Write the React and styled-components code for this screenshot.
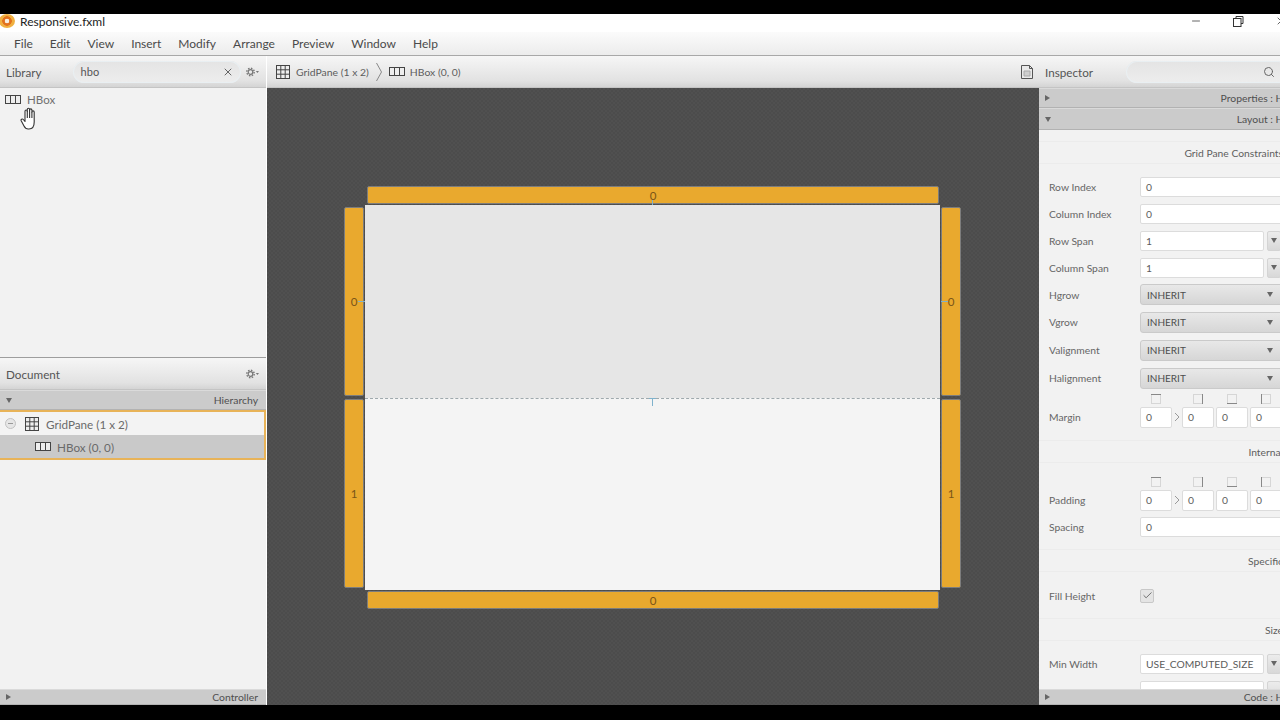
import React from 'react';
import styled, { createGlobalStyle } from 'styled-components';
import { X, Search, Check, Minus } from 'lucide-react';

const Global = createGlobalStyle`
  html, body { margin: 0; background: #000; }
  #root { width: 1280px; height: 720px; overflow: hidden; }
  * { box-sizing: border-box; }
`;

const Shell = styled.div`
  width: 1280px;
  height: 720px;
  padding: 14px 0 15px;
  background: #000;
  display: flex;
  flex-direction: column;
  font-family: Lato, "Open Sans", sans-serif;
  font-size: 12px;
  color: #5a5a5a;
  overflow: hidden;
`;

const TitleBar = styled.div`
  height: 18px;
  flex: none;
  padding-bottom: 4px;
  background: #fff;
  display: flex;
  align-items: center;
  color: #222;
  font-size: 12px;
`;

const Logo = styled.div`
  width: 16px;
  height: 14px;
  margin-left: -1px;
  margin-right: 5px;
  border-radius: 50%;
  background: radial-gradient(circle at 50% 50%, #f7efe0 0 2px, #e2711d 2.6px 4.5px, #f0b040 5px);
`;

const WindowButtons = styled.div`
  margin-left: auto;
  display: flex;
  align-items: center;
  gap: 31px;
  margin-right: -7px;
  color: #333;
`;

const MenuBar = styled.div`
  height: 24px;
  flex: none;
  padding-left: 14px;
  display: flex;
  align-items: center;
  gap: 17px;
  background: linear-gradient(#fbfbfb, #ececec);
  border-bottom: 1px solid #a8a8a8;
  color: #4a4a4a;
`;

const Main = styled.div`
  flex: 1;
  min-height: 0;
  display: grid;
  grid-template-columns: 267px 772px 241px;
`;

const Side = styled.div`
  display: flex;
  flex-direction: column;
  min-height: 0;
  background: #f1f1f1;
  overflow: hidden;
  border-right: ${p => (p.$left ? '1px solid #fff' : 'none')};
`;

const Header = styled.div`
  height: 32px;
  flex: none;
  display: flex;
  align-items: center;
  padding: 0 6px;
  background: linear-gradient(#f6f6f6, #e2e2e2 80%, #d4d4d4);
  color: #555;
  font-size: 11.7px;
  border-bottom: 1px solid #c4c4c4;
`;

const SearchBox = styled.div`
  height: 22px;
  flex: none;
  display: flex;
  align-items: center;
  justify-content: space-between;
  border-radius: 11px;
  background: linear-gradient(#e4e4e4, #ededed);
  box-shadow: inset 0 0 0 1px #e9eff2;
  color: #555;
  width: ${p => p.$w}px;
  margin-left: ${p => p.$ml}px;
  padding: 0 ${p => p.$pr}px 0 8px;
  font-size: 11px;
`;

const GearWrap = styled.span`
  margin-left: auto;
  display: flex;
`;

const LibraryBody = styled.div`
  height: 270px;
  flex: none;
  padding: 3px 5px;
  position: relative;
  border-bottom: 1px solid #9e9e9e;
  background: #f2f2f2;
`;

const LibraryItem = styled.div`
  display: flex;
  align-items: center;
  gap: 6px;
  height: 16px;
  color: #707070;
  font-size: 11.5px;
`;

const Pointer = styled.span`
  position: absolute;
  left: 20px;
  top: 19px;
  display: flex;
`;

const Bar = styled.div`
  height: ${p => p.$h || 20}px;
  flex: none;
  display: flex;
  align-items: center;
  justify-content: space-between;
  padding: 0 8px 0 6px;
  background: #cbcbcb;
  border-bottom: 1px solid #b2b2b2;
  border-top: 1px solid #dadada;
  color: #4f4f4f;
  font-size: 10.4px;
`;

const InspectorBar = styled(Bar)`
  width: 270px;
`;

const Caret = styled.span`
  width: 0;
  height: 0;
  border-style: solid;
  border-color: transparent;
  ${p => p.$open
    ? 'border-width: 5px 3px 0; border-top-color: #666;'
    : 'border-width: 3px 0 3px 5px; border-left-color: #666;'}
`;

const Tree = styled.div`
  flex: 1;
  background: #f2f2f2;
`;

const TreeSelection = styled.div`
  border: 2px solid #e8b358;
  border-left: 0;
`;

const TreeRow = styled.div`
  height: ${p => p.$h}px;
  display: flex;
  align-items: center;
  gap: 6px;
  padding-left: ${p => p.$indent}px;
  background: ${p => (p.$dark ? '#c9c9c9' : '#f3f3f3')};
  color: #6a6a6a;
  font-size: 11.7px;
`;

const Collapse = styled.span`
  width: 11px;
  height: 11px;
  margin-right: 2px;
  border-radius: 50%;
  border: 1px solid #c2c2c2;
  background: #e6e6e6;
  display: flex;
  align-items: center;
  justify-content: center;
  &::after { content: ''; width: 5px; height: 1px; background: #999; }
`;

const Center = styled.div`
  display: flex;
  flex-direction: column;
  min-height: 0;
`;

const Crumbs = styled(Header)`
  padding: 0 4px 0 8px;
  gap: 5px;
  font-size: 10.4px;
  color: #5c5c5c;
`;

const CrumbSep = styled.svg`
  margin: 0 2px;
`;

const DocButton = styled.span`
  margin-left: auto;
  display: flex;
`;

const Canvas = styled.div`
  flex: 1;
  padding: 98px 0 0 77px;
  background-color: #4e4e4e;
  background-image: conic-gradient(#4c4c4c 25%, #505050 0 50%, #4c4c4c 0 75%, #505050 0);
  background-size: 4px 4px;
`;

const Pane = styled.div`
  width: 617px;
  display: grid;
  grid-template-columns: 20px 577px 20px;
  grid-template-rows: 19px 193px 192px 19px;
  position: relative;
`;

const Ruler = styled.div`
  display: flex;
  align-items: center;
  justify-content: center;
  background: #e9a92e;
  border: 1px solid #7d7d7d;
  border-radius: 2px;
  color: #7a5518;
  font-size: 11.5px;
`;

const HRuler = styled(Ruler)`
  grid-column: 2;
  margin: ${p => (p.$top ? '0 2px 1px 3px' : '1px 2px 0 3px')};
`;

const VRuler = styled(Ruler)`
  grid-column: ${p => p.$col};
  margin: ${p => (p.$lower ? '1px' : '2px')} 0 2px;
`;

const Cell = styled.div`
  grid-column: 2;
  margin: 0 1px;
  background: ${p => (p.$lower ? '#f4f4f4' : '#e6e6e6')};
  border-top: ${p => (p.$lower ? '1px dashed #9fa9ad' : 'none')};
`;

// small blue resize marks laid over the rulers
const Tick = styled.span`
  position: absolute;
  left: ${p => p.$x}px;
  top: ${p => p.$y}px;
  width: ${p => p.$w}px;
  height: ${p => p.$h}px;
  background: #7fb2cc;
  &::before {
    content: '';
    position: absolute;
    top: 0;
    left: -3px;
    width: 7px;
    height: 1px;
    background: #7fb2cc;
    display: ${p => (p.$cap ? 'block' : 'none')};
  }
`;

const Scroll = styled.div`
  flex: 1;
  min-height: 0;
  overflow: hidden;
  background: #f2f2f2;
  padding-top: 11px;
`;

const SectionTitle = styled.div`
  height: 23px;
  margin-top: ${p => p.$mt || 0}px;
  margin-bottom: ${p => p.$mb || 0}px;
  width: 244px;
  display: flex;
  align-items: center;
  justify-content: flex-end;
  border-top: 1px solid #ececec;
  border-bottom: 1px solid #ececec;
  white-space: nowrap;
  font-size: 10.3px;
  color: #5e5e5e;
`;

const Row = styled.div`
  height: ${p => p.$h || 27}px;
  margin-top: ${p => p.$mt || 0}px;
  display: grid;
  grid-template-columns: 91px 1fr;
  align-items: center;
  padding-left: 10px;
  width: 300px;
  font-size: 10.3px;
  color: #666;
`;

const Field = styled.div`
  height: 20px;
  display: flex;
  align-items: center;
  padding-left: 5px;
  background: #fff;
  border: 1px solid #dcdcdc;
  border-radius: 2px;
  color: #5c5c5c;
  font-size: 10.3px;
  width: ${p => p.$w || 209}px;
`;

const Combo = styled.div`
  display: flex;
  gap: 3px;
`;

const DropButton = styled.div`
  width: 14px;
  height: 20px;
  display: flex;
  align-items: center;
  justify-content: center;
  background: linear-gradient(#ececec, #d8d8d8);
  border: 1px solid #d4d4d4;
  border-radius: 2px;
`;

const Select = styled.div`
  width: 145px;
  height: 21px;
  display: flex;
  align-items: center;
  justify-content: space-between;
  padding: 0 11px 0 6px;
  background: linear-gradient(#e8e8e8, #d6d6d6);
  border: 1px solid #cacaca;
  border-radius: 3px;
  color: #4e4e4e;
  font-size: 10px;
`;

const Quad = styled.div`
  display: grid;
  grid-template-columns: 32px 6px 32px 32px 32px;
  column-gap: 2px;
  align-items: center;
  justify-items: center;
`;

const QuadField = styled(Field)`
  width: 32px;
  height: 21px;
  justify-self: stretch;
`;

const Arrow = styled.svg`
  display: block;
`;

const Checkbox = styled.div`
  width: 14px;
  height: 14px;
  display: flex;
  align-items: center;
  justify-content: center;
  background: #e4e4e4;
  border: 1px solid #c8c8c8;
  border-radius: 2px;
  color: #444;
`;

const GridIcon = () => (
  <svg width="16" height="16" viewBox="0 0 16 16" fill="none" stroke="#444" strokeWidth="1">
    <rect x="1.5" y="1.5" width="13" height="13" fill="#eee" />
    <path d="M5.8 1.5v13M10.2 1.5v13M1.5 5.8h13M1.5 10.2h13" />
  </svg>
);

const HBoxIcon = () => (
  <svg width="16" height="11" viewBox="0 0 16 11" fill="none" stroke="#444" strokeWidth="1">
    <rect x="0.5" y="1.5" width="15" height="8" fill="#eee" />
    <path d="M5.5 1.5v8M10.5 1.5v8" />
  </svg>
);

const Gear = () => (
  <svg width="14" height="10" viewBox="0 0 14 10" fill="none" stroke="#777">
    <circle cx="4.5" cy="5" r="3.7" strokeWidth="1.4" strokeDasharray="1.5 1.4" />
    <circle cx="4.5" cy="5" r="2.3" strokeWidth="1.2" />
    <path d="M9.8 4h3.2l-1.6 2z" fill="#777" stroke="none" />
  </svg>
);

const DocIcon = () => (
  <svg width="16" height="16" viewBox="0 0 16 16" fill="#e9e9e9" stroke="#555">
    <path d="M2.5 1.5h8l3 3v10h-11z" />
    <path d="M5 7h6v5H5z" fill="#cfcfcf" stroke="#aaa" />
    <path d="M10.5 1.5v3h3" fill="none" />
  </svg>
);

const Restore = () => (
  <svg width="11" height="11" viewBox="0 0 11 11" fill="#fff" stroke="#333">
    <path d="M3 2.5V.5h7v7H8" />
    <rect x="0.5" y="2.5" width="7.5" height="8" />
  </svg>
);

const HandCursor = () => (
  <svg width="17" height="23" viewBox="0 0 17 23" fill="#fff" stroke="#333" strokeWidth="1.1" strokeLinejoin="round">
    <path d="M5 13V4.2a1.15 1.15 0 0 1 2.3 0V2.4a1.15 1.15 0 0 1 2.3 0V3a1.15 1.15 0 0 1 2.3 0v2a1.15 1.15 0 0 1 2.3 0v10c0 4.200-2 7-5.200 7H8.200c-2 0-3.200-1-4.200-3L1.200 13.800c-.7-1.400 1.100-2.400 2.100-1.300L5 14.500z" />
    <path d="M7.300 4v7M9.600 3v8M11.900 5v6" fill="none" />
  </svg>
);

const Side4 = ({ side }) => {
  const lines = {
    top: 'M1 1.500h10',
    right: 'M10.500 1v10',
    bottom: 'M1 10.500h10',
    left: 'M1.500 1v10',
  };
  return (
    <svg width="12" height="12" viewBox="0 0 12 12" fill="none">
      <rect x="1.500" y="1.500" width="9" height="9" stroke="#d6d6d6" />
      <path d={lines[side]} stroke="#888" />
    </svg>
  );
};

const QuadRows = ({ label }) => (
  <>
    <Row $h={14}>
      <span />
      <Quad>
        <Side4 side="top" />
        <span />
        <Side4 side="right" />
        <Side4 side="bottom" />
        <Side4 side="left" />
      </Quad>
    </Row>
    <Row $h={22}>
      <span>{label}</span>
      <Quad>
        <QuadField>0</QuadField>
        <Arrow width="6" height="10" viewBox="0 0 6 10" fill="none" stroke="#999">
          <path d="M1 1l4 4-4 4" />
        </Arrow>
        <QuadField>0</QuadField>
        <QuadField>0</QuadField>
        <QuadField>0</QuadField>
      </Quad>
    </Row>
  </>
);

const menus = ['File', 'Edit', 'View', 'Insert', 'Modify', 'Arrange', 'Preview', 'Window', 'Help'];
const selects = [
  ['Hgrow', 27],
  ['Vgrow', 28],
  ['Valignment', 28],
  ['Halignment', 28],
];

export default function App() {
  return (
    <Shell>
      <Global />
      <TitleBar>
        <Logo />
        Responsive.fxml
        <WindowButtons>
          <Minus size={12} strokeWidth={1.5} />
          <Restore />
          <X size={12} strokeWidth={1.5} />
        </WindowButtons>
      </TitleBar>
      <MenuBar>
        {menus.map(m => <span key={m}>{m}</span>)}
      </MenuBar>
      <Main>
        <Side $left>
          <Header>
            Library
            <SearchBox $w={168} $ml={31} $pr={7}>
              hbo
              <X size={12} color="#555" strokeWidth={1.8} />
            </SearchBox>
            <GearWrap><Gear /></GearWrap>
          </Header>
          <LibraryBody>
            <LibraryItem><HBoxIcon />HBox</LibraryItem>
            <Pointer><HandCursor /></Pointer>
          </LibraryBody>
          <Header>
            Document
            <GearWrap><Gear /></GearWrap>
          </Header>
          <Bar>
            <Caret $open />
            Hierarchy
          </Bar>
          <Tree>
            <TreeSelection>
              <TreeRow $h={23} $indent={5}>
                <Collapse />
                <GridIcon />
                GridPane (1 x 2)
              </TreeRow>
              <TreeRow $h={23} $indent={35} $dark>
                <HBoxIcon />
                HBox (0, 0)
              </TreeRow>
            </TreeSelection>
          </Tree>
          <Bar $h={16}>
            <Caret />
            Controller
          </Bar>
        </Side>
        <Center>
          <Crumbs>
            <GridIcon />
            GridPane (1 x 2)
            <CrumbSep width="6" height="20" viewBox="0 0 6 20" fill="none" stroke="#888">
              <path d="M.5 1l5 9-5 9" />
            </CrumbSep>
            <HBoxIcon />
            HBox (0, 0)
            <DocButton><DocIcon /></DocButton>
          </Crumbs>
          <Canvas>
            <Pane>
              <HRuler $top>0</HRuler>
              <span />
              <VRuler $col={1}>0</VRuler>
              <Cell />
              <VRuler $col={3}>0</VRuler>
              <VRuler $col={1} $lower>1</VRuler>
              <Cell $lower />
              <VRuler $col={3} $lower>1</VRuler>
              <HRuler>0</HRuler>
              <Tick $x={308} $y={14} $w={1} $h={5} />
              <Tick $x={308} $y={212} $w={1} $h={8} $cap />
              <Tick $x={14} $y={115} $w={7} $h={1} />
              <Tick $x={597} $y={115} $w={7} $h={1} />
            </Pane>
          </Canvas>
        </Center>
        <Side>
          <Header>
            Inspector
            <SearchBox $w={163} $ml={33} $pr={14}>
              <span />
              <Search size={12} color="#666" />
            </SearchBox>
          </Header>
          <InspectorBar>
            <Caret />
            Properties : HBox
          </InspectorBar>
          <InspectorBar $h={22}>
            <Caret $open />
            Layout : HBox
          </InspectorBar>
          <Scroll>
            <SectionTitle $mb={9}>Grid Pane Constraints</SectionTitle>
            <Row><span>Row Index</span><Field>0</Field></Row>
            <Row><span>Column Index</span><Field>0</Field></Row>
            <Row>
              <span>Row Span</span>
              <Combo><Field $w={124}>1</Field><DropButton><Caret $open /></DropButton></Combo>
            </Row>
            <Row>
              <span>Column Span</span>
              <Combo><Field $w={124}>1</Field><DropButton><Caret $open /></DropButton></Combo>
            </Row>
            {selects.map(([label, h]) => (
              <Row key={label} $h={h}>
                <span>{label}</span>
                <Select>INHERIT<Caret $open /></Select>
              </Row>
            ))}
            <QuadRows label="Margin" />
            <SectionTitle $mt={12} $mb={12}>Internal</SectionTitle>
            <QuadRows label="Padding" />
            <Row $mt={2}><span>Spacing</span><Field>0</Field></Row>
            <SectionTitle $mt={9} $mb={10}>Specific</SectionTitle>
            <Row>
              <span>Fill Height</span>
              <Checkbox><Check size={11} strokeWidth={1.6} /></Checkbox>
            </Row>
            <SectionTitle $mt={9} $mb={9}>Size</SectionTitle>
            <Row>
              <span>Min Width</span>
              <Combo><Field $w={124}>USE_COMPUTED_SIZE</Field><DropButton><Caret $open /></DropButton></Combo>
            </Row>
            <Row>
              <span />
              <Combo><Field $w={124} /><DropButton /></Combo>
            </Row>
          </Scroll>
          <InspectorBar $h={16}>
            <Caret />
            Code : HBox
          </InspectorBar>
        </Side>
      </Main>
    </Shell>
  );
}
